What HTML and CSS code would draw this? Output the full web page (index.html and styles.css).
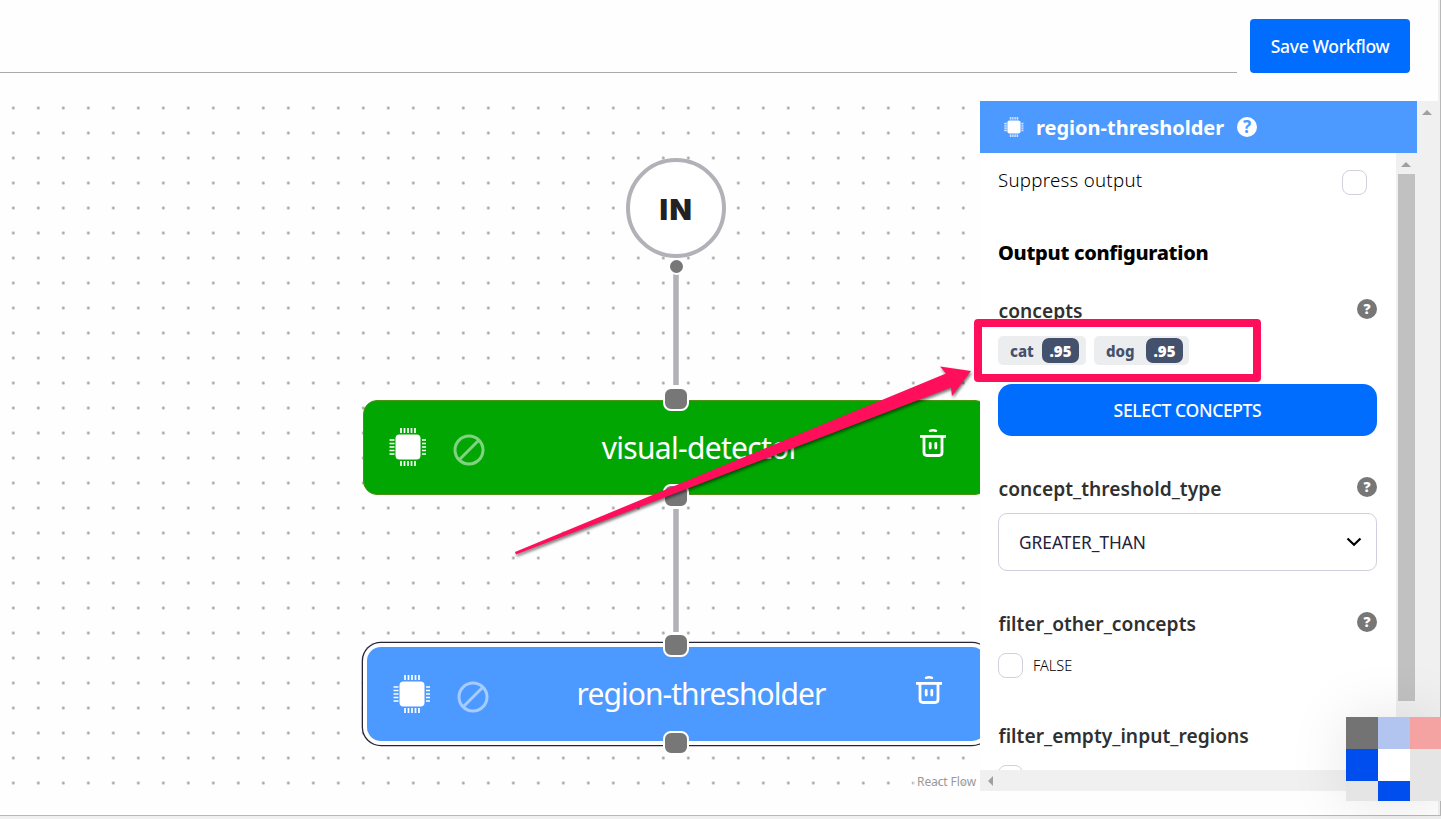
FILE: index.html
```html
<!DOCTYPE html>
<html lang="en">
<head>
<meta charset="utf-8">
<title>Workflow editor</title>
<link rel="stylesheet" href="styles.css">
</head>
<body>
<svg class="defs" aria-hidden="true">
  <symbol id="chip" viewBox="0 0 38 38">
    <rect x="6.5" y="6.5" width="25" height="25" rx="4"/>
    <path d="M12 0v5M15.5 0v5M19 0v5M22.5 0v5M26 0v5M12 33v5M15.5 33v5M19 33v5M22.5 33v5M26 33v5M0.500 12h5M0.500 15.5h5M0.500 19h5M0.500 22.500h5M0.500 26h5M33 12h4M33 15.500h4M33 19h4M33 22.500h4M33 26h4" stroke="#fff" stroke-width="1.7" fill="none"/>
  </symbol>
  <symbol id="ban" viewBox="0 0 32 32">
    <g fill="none" stroke="#fff" stroke-width="3"><circle cx="16" cy="16" r="14"/><path d="M6.500 25.500l19-19"/></g>
  </symbol>
  <symbol id="trash" viewBox="0 0 26 28">
    <g fill="none" stroke="#fff" stroke-width="2.800"><path d="M10 1.800Q13 .6 16 1.800" stroke-linecap="round" stroke-width="2.400"/><path d="M0 7.400h26"/><path d="M4 8v15.500q0 3 3 3h12q3 0 3-3V8"/><path d="M10.200 14.500v4.500M15.800 14.500v4.500" stroke-linecap="round" stroke-width="2.800"/></g>
  </symbol>
</svg>
<div class="page">
  <header class="topbar">
    <div class="name-field"></div>
    <button class="save"><span class="t-save">Save Workflow</span></button>
  </header>
  <main class="workspace">
    <section class="canvas">
      <svg class="edges" width="980" height="690"><path d="M676 173v111M676 408v123" stroke="#b1b1b7" stroke-width="5.500"/></svg>
      <div class="node-in"><span>IN</span></div>
      <i class="dot"></i>
      <div class="node green">
        <svg class="chip"><use href="#chip"/></svg><svg class="ban"><use href="#ban"/></svg>
        <span class="label">visual-detector</span>
        <svg class="trash"><use href="#trash"/></svg>
      </div>
      <div class="node blue">
        <svg class="chip"><use href="#chip"/></svg><svg class="ban"><use href="#ban"/></svg>
        <span class="label">region-thresholder</span>
        <svg class="trash"><use href="#trash"/></svg>
      </div>
      <i class="handle h1"></i><i class="handle h2"></i><i class="handle h3"></i><i class="handle h4"></i>
      <span class="credit">React Flow</span>
    </section>
    <aside class="side">
      <div class="side-main">
        <div class="side-head">
          <svg class="mini-chip"><use href="#chip"/></svg>
          <h2>region-thresholder</h2>
          <b class="help light">?</b>
        </div>
        <div class="side-body">
          <div class="form">
            <div class="row suppress"><span>Suppress output</span><i class="check"></i></div>
            <h3>Output configuration</h3>
            <div class="row field-head"><span>concepts</span><b class="help">?</b></div>
            <div class="tags">
              <span class="tag tag-cat"><span>cat</span><b>.95</b></span>
              <span class="tag tag-dog"><span>dog</span><b>.95</b></span>
            </div>
            <button class="select-btn">SELECT CONCEPTS</button>
            <div class="row field-head second"><span>concept_threshold_type</span><b class="help">?</b></div>
            <div class="dropdown"><span>GREATER_THAN</span><svg width="16" height="10" viewBox="0 0 16 10"><path d="M1.500 1.500L8 7.800l6.500-6.300" fill="none" stroke="#000" stroke-width="2.200"/></svg></div>
            <div class="row field-head third"><span>filter_other_concepts</span><b class="help">?</b></div>
            <div class="option"><i class="check"></i><span>FALSE</span></div>
            <div class="row field-head fourth"><span>filter_empty_input_regions</span></div>
            <div class="option last"><i class="check"></i></div>
          </div>
          <div class="vbar"><i class="up"></i><i class="thumb"></i></div>
        </div>
        <div class="hbar"><i class="left"></i></div>
      </div>
      <div class="outer-bar"><i class="up"></i></div>
    </aside>
  </main>
  <footer class="bottom"></footer>
  <div class="edge-strip"></div>
  <div class="mosaic"><i class="c1"></i><i class="c2"></i><i class="c3"></i><i class="c4"></i><i class="c5"></i><i class="c6"></i><i class="c6"></i><i class="c4"></i><i class="c6"></i></div>
  <svg class="arrow" width="1441" height="819"><path d="M515 552L946 373.500L940 366.500L971 371L952 396L951 387.500L516 554.500Z" fill="#ff0f5b"/></svg>
  <div class="callout"></div>
</div>
</body>
</html>
```
FILE: styles.css
```css
* { box-sizing: border-box; }
body { margin: 0; font-family: "Noto Sans", "Open Sans", sans-serif; color: #000; }
button { border: 0; font-family: inherit; padding: 0; }
i { display: block; font-style: normal; }
svg { display: block; flex: none; }
.defs { position: absolute; width: 0; height: 0; }
.page { position: relative; width: 1441px; height: 819px; overflow: hidden; background: #fefefe; display: flex; flex-direction: column; }
span, h2, h3 { white-space: nowrap; }

.topbar { height: 101px; display: flex; flex: none; }
.name-field { width: 1237px; height: 73px; border-bottom: 1px solid #aaa; }
.save { width: 160px; height: 54px; margin: 19px 0 0 13px; padding-top: 1px; border-radius: 4px; background: #006dff; color: #fff; font-size: 17.5px; font-weight: 500; letter-spacing: -.35px; line-height: 53px; }

.workspace { height: 690px; display: flex; flex: none; }
.canvas { position: relative; width: 980px; height: 690px; overflow: hidden; background: radial-gradient(circle, #a0a0a0 0, #a4a4a4 .9px, transparent 1.9px) .8px -5.500px / 25px 25px; flex: none; }
.edges { position: absolute; left: 0; top: 0; }
.node-in { position: absolute; left: 626px; top: 57px; width: 100px; height: 100px; border: 4px solid #b1b1b7; border-radius: 50%; background: #fff; display: flex; align-items: center; justify-content: center; padding: 3px 0 0 1px; font: 900 29px/32px Inter, sans-serif; letter-spacing: 1.500px; color: #222; }
.dot { position: absolute; left: 668px; top: 156.500px; width: 17px; height: 17px; border: 2px solid #fff; border-radius: 50%; background: #777; }
.node { position: absolute; display: flex; align-items: center; color: #fff; font-size: 30px; letter-spacing: -.95px; }
.green { left: 363px; top: 299px; width: 626px; height: 95px; border-radius: 14px; border: 1px solid #4c9315; background: #02a603; padding-left: 25px; letter-spacing: -.7px; }
.blue { left: 367px; top: 546px; width: 619px; height: 94px; border-radius: 14px; background: #4c99ff; padding-left: 26px; box-shadow: 0 0 0 4px #fff, 0 0 0 5.300px #25253a; }
.chip { width: 38px; height: 38px; fill: #fff; margin-top: -1px; }
.ban { width: 32px; height: 32px; margin: 5px 0 0 26px; opacity: .5; }
.label { flex: 1; text-align: center; line-height: 40px; padding-right: 3px; }
.trash { width: 26px; height: 28px; margin: 0 42px 9px 0; }
.blue .trash { margin: 0 44px 8px 0; }
.handle { position: absolute; left: 663px; width: 26px; height: 24px; border: 2px solid #fff; border-radius: 8px; background: #777; }
.h1 { top: 286px; } .h2 { top: 383px; } .h3 { top: 532px; } .h4 { top: 630px; }
.credit { position: absolute; right: 0; bottom: 0; padding: 3px 4px 1px; height: 20px; font-size: 12px; line-height: 16px; color: #999; letter-spacing: -.1px; background: rgba(255,255,255,.5); }

.side { display: flex; width: 458px; }
.side-main { width: 437px; }
.side-head { height: 52px; background: #4c99ff; color: #fff; display: flex; align-items: center; padding-left: 24px; }
.mini-chip { width: 20px; height: 20px; fill: #fff; margin-top: -1px; }
h2, h3 { margin: 0; font-size: 20px; line-height: 28px; }
h2 { width: 189px; margin: 2px 12px 0; }
.help { width: 20px; height: 20px; border-radius: 50%; background: #777; color: #fff; font-size: 14px; line-height: 20px; text-align: center; flex: none; }
.light { background: #fff; color: #4c99ff; font-size: 17px; margin-top: -1px; }
.side-body { height: 617px; display: flex; background: #fff; overflow: hidden; }
.form { width: 416px; height: 617px; padding: 16px 19px 0 18px; overflow: hidden; }
.row { display: flex; justify-content: space-between; }
.suppress { height: 26px; padding: 0 10px 0 0; font-size: 18.700px; line-height: 22px; font-weight: 300; letter-spacing: .25px; }
.check { width: 25px; height: 25px; border: 1px solid #cfd1de; border-radius: 8px; background: #fff; margin-top: 1px; flex: none; }
h3 { margin-top: 44px; height: 29px; font-weight: 800; line-height: 28px; letter-spacing: -.3px; }
.field-head { margin-top: 31px; height: 28px; font-size: 19.200px; font-weight: 600; line-height: 24px; color: #303030; padding-left: .5px; }
.field-head > span { letter-spacing: .03px; }
.tags { display: flex; gap: 8px; margin-top: 9px; height: 29px; }
.tag { height: 29px; border-radius: 5px; background: #ebedef; display: flex; align-items: center; font-size: 15px; font-weight: 800; color: #44516c; padding-left: 12px; }
.tag-cat { width: 88px; } .tag-dog { width: 95px; }
.tag > span { width: 32px; line-height: 22px; }
.tag-dog > span { width: 40px; }
.tag b { width: 37px; height: 25px; border-radius: 7px; background: #44516c; color: #fff; line-height: 26px; text-align: center; font-weight: 900; }
.select-btn { display: block; width: 379px; height: 52px; margin-top: 19px; border-radius: 14px; background: #006dff; color: #fff; font-size: 17.500px; font-weight: 500; letter-spacing: -.35px; }
.second { margin-top: 41px; }
.dropdown { margin-top: 8px; height: 58px; border: 1px solid #cfd1de; border-radius: 9px; display: flex; align-items: center; justify-content: space-between; padding: 0 14px 0 20px; font-size: 17.300px; color: #22223a; }
.third { margin-top: 41px; }
.option { margin-top: 12px; height: 27px; display: flex; gap: 10px; font-size: 14.500px; line-height: 27px; font-weight: 300; }
.fourth { margin-top: 45px; }
.last { margin-top: 12px; }
.vbar { width: 21px; background: #f0f0f0; padding: 9px 2px 0; }
.up { width: 0; height: 0; border: 5px solid transparent; border-top: 0; border-bottom-color: #a0a0a0; margin-left: 3px; }
.thumb { width: 17px; height: 527px; margin-top: 7px; background: #c1c1c1; }
.hbar { height: 21px; background: #f0f0f0; padding: 6px 8px; }
.left { width: 0; height: 0; border: 5px solid transparent; border-left: 0; border-right-color: #a0a0a0; }
.outer-bar { width: 21px; background: #f0f0f0; padding: 9px 2px; }
.bottom { margin-top: 24px; height: 4px; background: #f0f0f0; border-top: 1px solid #b8b8b8; }
.edge-strip { position: absolute; left: 1438px; top: 0; width: 3px; height: 815px; background: #f0f0f0; border-right: 1px solid #b8b8b8; }
.mosaic { position: absolute; left: 1346px; top: 717px; width: 96px; height: 84px; display: grid; grid-template: 32px 32px 20px / 32px 32px 32px; box-shadow: 0 0 60px rgba(0,0,0,.1); }
.c1 { background: #737373; } .c2 { background: #b2c5f0; } .c3 { background: #f5a2a3; } .c4 { background: #004eed; } .c5 { background: #fff; } .c6 { background: #e5e5e5; }
.arrow { position: absolute; left: 0; top: 0; filter: drop-shadow(1px 2px 1.500px rgba(0,0,0,.55)); }
.callout { position: absolute; left: 974px; top: 319px; width: 287px; height: 63px; border: 8px solid #ff0f5b; border-radius: 4px; }
```
